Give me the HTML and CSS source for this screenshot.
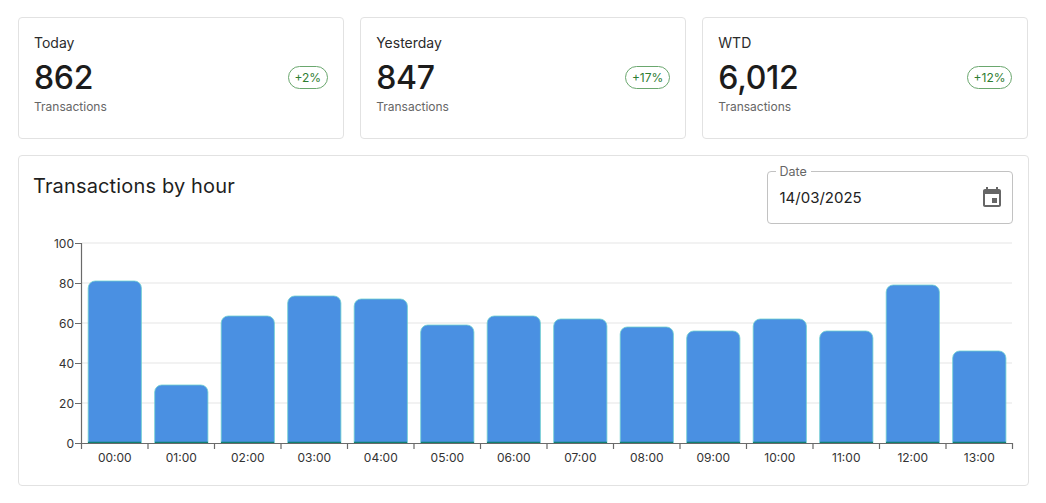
FILE: index.html
```html
<!DOCTYPE html>
<html lang="en">
<head>
<meta charset="utf-8">
<title>Transactions</title>
<link rel="stylesheet" href="styles.css">
</head>
<body>
<main class="page">
  <section class="stats">
    <article class="card stat">
      <div class="stat-text">
        <div class="stat-label">Today</div>
        <div class="stat-value">862</div>
        <div class="stat-unit">Transactions</div>
      </div>
      <span class="chip">+2%</span>
    </article>
    <article class="card stat">
      <div class="stat-text">
        <div class="stat-label">Yesterday</div>
        <div class="stat-value">847</div>
        <div class="stat-unit">Transactions</div>
      </div>
      <span class="chip">+17%</span>
    </article>
    <article class="card stat">
      <div class="stat-text">
        <div class="stat-label">WTD</div>
        <div class="stat-value">6,012</div>
        <div class="stat-unit">Transactions</div>
      </div>
      <span class="chip">+12%</span>
    </article>
  </section>
  <section class="card chart-card">
    <header class="chart-head">
      <h2 class="chart-title">Transactions by hour</h2>
      <div class="date-field">
        <span class="date-label">Date</span>
        <span class="date-value">14/03/2025</span>
        <svg class="date-icon" viewBox="0 0 24 24" width="24" height="24"><path d="M17 12h-5v5h5v-5zM16 1v2H8V1H6v2H5c-1.11 0-1.99.9-1.99 2L3 19c0 1.1.89 2 2 2h14c1.1 0 2-.9 2-2V5c0-1.1-.9-2-2-2h-1V1h-2zm3 18H5V8h14v11z"/></svg>
      </div>
    </header>
    <svg class="chart" viewBox="19 232 1008 230" width="1008" height="230">
      <g class="grid">
        <line x1="82" x2="1012" y1="243" y2="243"/>
        <line x1="82" x2="1012" y1="283" y2="283"/>
        <line x1="82" x2="1012" y1="323" y2="323"/>
        <line x1="82" x2="1012" y1="363" y2="363"/>
        <line x1="82" x2="1012" y1="403" y2="403"/>
      </g>
      <g class="bars">
        <path d="M88.2 443V288a7 7 0 0 1 7-7h39.2a7 7 0 0 1 7 7V443z"/>
        <path d="M154.7 443V392a7 7 0 0 1 7-7h39.2a7 7 0 0 1 7 7V443z"/>
        <path d="M221.2 443V323a7 7 0 0 1 7-7h39.2a7 7 0 0 1 7 7V443z"/>
        <path d="M287.7 443V303a7 7 0 0 1 7-7h39.2a7 7 0 0 1 7 7V443z"/>
        <path d="M354.2 443V306a7 7 0 0 1 7-7h39.2a7 7 0 0 1 7 7V443z"/>
        <path d="M420.7 443V332a7 7 0 0 1 7-7h39.2a7 7 0 0 1 7 7V443z"/>
        <path d="M487.2 443V323a7 7 0 0 1 7-7h39.2a7 7 0 0 1 7 7V443z"/>
        <path d="M553.7 443V326a7 7 0 0 1 7-7h39.2a7 7 0 0 1 7 7V443z"/>
        <path d="M620.2 443V334a7 7 0 0 1 7-7h39.2a7 7 0 0 1 7 7V443z"/>
        <path d="M686.7 443V338a7 7 0 0 1 7-7h39.2a7 7 0 0 1 7 7V443z"/>
        <path d="M753.2 443V326a7 7 0 0 1 7-7h39.2a7 7 0 0 1 7 7V443z"/>
        <path d="M819.7 443V338a7 7 0 0 1 7-7h39.2a7 7 0 0 1 7 7V443z"/>
        <path d="M886.2 443V292a7 7 0 0 1 7-7h39.2a7 7 0 0 1 7 7V443z"/>
        <path d="M952.7 443V358a7 7 0 0 1 7-7h39.2a7 7 0 0 1 7 7V443z"/>
      </g>
      <g class="baseline-segs">
        <line x1="88" x2="141" y1="442.5" y2="442.5"/>
        <line x1="155" x2="208" y1="442.5" y2="442.5"/>
        <line x1="221" x2="274" y1="442.5" y2="442.5"/>
        <line x1="288" x2="341" y1="442.5" y2="442.5"/>
        <line x1="354" x2="407" y1="442.5" y2="442.5"/>
        <line x1="421" x2="474" y1="442.5" y2="442.5"/>
        <line x1="487" x2="540" y1="442.5" y2="442.5"/>
        <line x1="554" x2="607" y1="442.5" y2="442.5"/>
        <line x1="620" x2="673" y1="442.5" y2="442.5"/>
        <line x1="687" x2="740" y1="442.5" y2="442.5"/>
        <line x1="753" x2="806" y1="442.5" y2="442.5"/>
        <line x1="820" x2="873" y1="442.5" y2="442.5"/>
        <line x1="886" x2="939" y1="442.5" y2="442.5"/>
        <line x1="953" x2="1006" y1="442.5" y2="442.5"/>
      </g>
      <path class="axis" d="M75 243.5H81.5V449M75 283.5H81.5M75 323.5H81.5M75 363.5H81.5M75 403.5H81.5M75 443.5H1012.5V449M148 443.5V449M214.5 443.5V449M281 443.5V449M347.5 443.5V449M414 443.5V449M480.5 443.5V449M547 443.5V449M613.5 443.5V449M680 443.5V449M746.5 443.5V449M813 443.5V449M879.5 443.5V449M946 443.5V449"/>
      <g class="y-labels">
        <text x="74" y="248">100</text>
        <text x="74" y="288">80</text>
        <text x="74" y="328">60</text>
        <text x="74" y="368">40</text>
        <text x="74" y="408">20</text>
        <text x="74" y="448">0</text>
      </g>
      <g class="x-labels">
        <text x="114.8" y="462">00:00</text>
        <text x="181.3" y="462">01:00</text>
        <text x="247.8" y="462">02:00</text>
        <text x="314.3" y="462">03:00</text>
        <text x="380.8" y="462">04:00</text>
        <text x="447.3" y="462">05:00</text>
        <text x="513.8" y="462">06:00</text>
        <text x="580.3" y="462">07:00</text>
        <text x="646.8" y="462">08:00</text>
        <text x="713.3" y="462">09:00</text>
        <text x="779.8" y="462">10:00</text>
        <text x="846.3" y="462">11:00</text>
        <text x="912.8" y="462">12:00</text>
        <text x="979.3" y="462">13:00</text>
      </g>
    </svg>
  </section>
</main>
</body>
</html>
```
FILE: styles.css
```css
* { box-sizing: border-box; }
html, body { margin: 0; padding: 0; background: #fff; }
body {
  font-family: "Inter", "Liberation Sans", sans-serif;
  color: #1f1f1f;
}
.page {
  padding: 17px 17.5px 0 18px;
  display: flex;
  flex-direction: column;
  gap: 16px;
  width: 1046px;
}
.card {
  background: #fff;
  border: 1px solid #e2e2e2;
  border-radius: 4px;
}
.stats {
  display: grid;
  grid-template-columns: repeat(3, 1fr);
  gap: 16px;
}
.stat {
  height: 122px;
  padding: 0 15px;
  display: flex;
  justify-content: space-between;
  align-items: center;
}
.stat-text { margin-bottom: 13px; }
.stat-label {
  font-size: 14px;
  line-height: 30px;
  color: #2b2b2b;
}
.stat-value {
  font-size: 32px;
  line-height: 40px;
  font-weight: 500;
  color: #1c1c1c;
  letter-spacing: -0.3px;
}
.stat-unit {
  padding-top: 1px;
  font-size: 12px;
  line-height: 16px;
  color: #666;
}
.chip {
  display: inline-flex;
  align-items: center;
  height: 23px;
  margin-bottom: 1px;
  padding: 0 6px;
  font-size: 12px;
  color: #2e7d32;
  border: 1px solid #6aa76e;
  border-radius: 12px;
}
.chart-card {
  height: 331px;
  padding: 15px 0 0;
}
.chart-head {
  display: flex;
  justify-content: space-between;
  align-items: flex-start;
  padding: 0 15px 0 14px;
  height: 61px;
}
.chart-title {
  margin: 3px 0 0;
  font-size: 20px;
  line-height: 24px;
  font-weight: 400;
  color: #1f1f1f;
  letter-spacing: 0.15px;
}
.date-field {
  position: relative;
  width: 246px;
  height: 53px;
  padding: 0 12px;
  display: flex;
  align-items: center;
  justify-content: space-between;
  border: 1px solid #c2c2c2;
  border-radius: 4px;
}
.date-label {
  position: absolute;
  left: 8px;
  top: -7px;
  padding: 0 4px;
  background: #fff;
  font-size: 12.5px;
  line-height: 14px;
  color: #666;
}
.date-value {
  font-size: 15px;
  color: #222;
}
.date-icon {
  display: block;
  margin-right: -4px;
  fill: #666;
}
.chart {
  display: block;
  overflow: visible;
}
.grid line { stroke: #eeeeee; stroke-width: 1.5; }
.bars path {
  fill: #4a90e2;
  stroke: #6fd0cf;
  stroke-width: 0.8;
}
.baseline-segs line { stroke: #0f7f72; stroke-width: 1.5; }
.axis { fill: none; stroke: #6a6a6a; stroke-width: 1.2; }
.y-labels text, .x-labels text {
  font-family: "Inter", "Liberation Sans", sans-serif;
  font-size: 12px;
  fill: #333;
}
.y-labels text { text-anchor: end; }
.x-labels text { text-anchor: middle; }
```
